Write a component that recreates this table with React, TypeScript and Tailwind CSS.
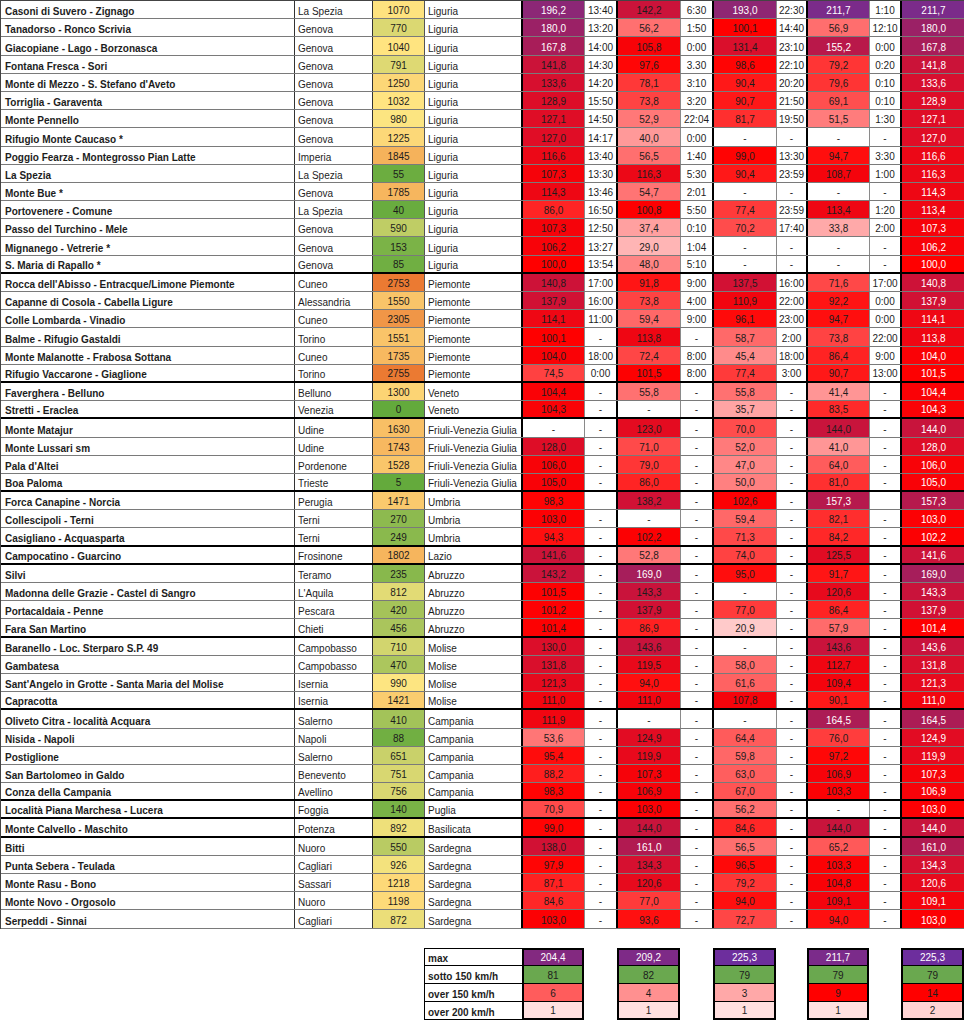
import { Fragment } from 'react'

type Stop = [number, number[]]

const valueStops: Stop[] = [
  [0, [255, 255, 255]],
  [100, [255, 0, 0]],
  [130, [220, 14, 42]],
  [150, [192, 22, 68]],
  [170, [165, 30, 92]],
  [200, [136, 40, 122]],
  [226, [108, 46, 158]],
]

const altStops: Stop[] = [
  [0, [99, 170, 60]],
  [1000, [255, 230, 130]],
  [2755, [235, 122, 50]],
]

function scale(stops: Stop[], v: number) {
  for (let i = 1; i < stops.length; i++) {
    const [a, ca] = stops[i - 1]
    const [b, cb] = stops[i]
    if (v <= b || i === stops.length - 1) {
      const t = Math.max(0, Math.min(1, (v - a) / (b - a)))
      return `rgb(${ca.map((x, j) => Math.round(x + (cb[j] - x) * t)).join(',')})`
    }
  }
  return '#fff'
}

const num = (s: string) => (s === '-' || s === '' ? null : parseFloat(s.replace(',', '.')))

const groups: string[][] = [
  [
    'Casoni di Suvero - Zignago|La Spezia|1070|Liguria|196,2|13:40|142,2|6:30|193,0|22:30|211,7|1:10|211,7',
    'Tanadorso - Ronco Scrivia|Genova|770|Liguria|180,0|13:20|56,2|1:50|100,1|14:40|56,9|12:10|180,0',
    'Giacopiane - Lago - Borzonasca|Genova|1040|Liguria|167,8|14:00|105,8|0:00|131,4|23:10|155,2|0:00|167,8',
    'Fontana Fresca - Sori|Genova|791|Liguria|141,8|14:30|97,6|3.30|98,6|22:10|79,2|0:20|141,8',
    "Monte di Mezzo - S. Stefano d'Aveto|Genova|1250|Liguria|133,6|14:20|78,1|3:10|90,4|20:20|79,6|0:10|133,6",
    'Torriglia - Garaventa|Genova|1032|Liguria|128,9|15:50|73,8|3:20|90,7|21:50|69,1|0:10|128,9',
    'Monte Pennello|Genova|980|Liguria|127,1|14:50|52,9|22:04|81,7|19:50|51,5|1:30|127,1',
    'Rifugio Monte Caucaso *|Genova|1225|Liguria|127,0|14:17|40,0|0:00|-|-|-|-|127,0',
    'Poggio Fearza - Montegrosso Pian Latte|Imperia|1845|Liguria|116,6|13:40|56,5|1:40|99,0|13:30|94,7|3:30|116,6',
    'La Spezia|La Spezia|55|Liguria|107,3|13:30|116,3|5:30|90,4|23:59|108,7|1:00|116,3',
    'Monte Bue *|Genova|1785|Liguria|114,3|13:46|54,7|2:01|-|-|-|-|114,3',
    'Portovenere - Comune|La Spezia|40|Liguria|86,0|16:50|100,8|5:50|77,4|23:59|113,4|1:20|113,4',
    'Passo del Turchino - Mele|Genova|590|Liguria|107,3|12:50|37,4|0:10|70,2|17:40|33,8|2:00|107,3',
    'Mignanego - Vetrerie *|Genova|153|Liguria|106,2|13:27|29,0|1:04|-|-|-|-|106,2',
    'S. Maria di Rapallo *|Genova|85|Liguria|100,0|13:54|48,0|5:10|-|-|-|-|100,0',
  ],
  [
    "Rocca dell'Abisso - Entracque/Limone Piemonte|Cuneo|2753|Piemonte|140,8|17:00|91,8|9:00|137,5|16:00|71,6|17:00|140,8",
    'Capanne di Cosola - Cabella Ligure|Alessandria|1550|Piemonte|137,9|16:00|73,8|4:00|110,9|22:00|92,2|0:00|137,9',
    'Colle Lombarda - Vinadio|Cuneo|2305|Piemonte|114,1|11:00|59,4|9:00|96,1|23:00|94,7|0:00|114,1',
    'Balme - Rifugio Gastaldi|Torino|1551|Piemonte|100,1|-|113,8|-|58,7|2:00|73,8|22:00|113,8',
    'Monte Malanotte - Frabosa Sottana|Cuneo|1735|Piemonte|104,0|18:00|72,4|8:00|45,4|18:00|86,4|9:00|104,0',
    'Rifugio Vaccarone - Giaglione|Torino|2755|Piemonte|74,5|0:00|101,5|8:00|77,4|3:00|90,7|13:00|101,5',
  ],
  [
    'Faverghera - Belluno|Belluno|1300|Veneto|104,4|-|55,8|-|55,8|-|41,4|-|104,4',
    'Stretti - Eraclea|Venezia|0|Veneto|104,3|-|-|-|35,7|-|83,5|-|104,3',
  ],
  [
    'Monte Matajur|Udine|1630|Friuli-Venezia Giulia|-|-|123,0|-|70,0|-|144,0|-|144,0',
    'Monte Lussari sm|Udine|1743|Friuli-Venezia Giulia|128,0|-|71,0|-|52,0|-|41,0|-|128,0',
    "Pala d'Altei|Pordenone|1528|Friuli-Venezia Giulia|106,0|-|79,0|-|47,0|-|64,0|-|106,0",
    'Boa Paloma|Trieste|5|Friuli-Venezia Giulia|105,0|-|86,0|-|50,0|-|81,0|-|105,0',
  ],
  [
    'Forca Canapine - Norcia|Perugia|1471|Umbria|98,3||138,2|-|102,6|-|157,3||157,3',
    'Collescipoli - Terni|Terni|270|Umbria|103,0|-|-|-|59,4|-|82,1|-|103,0',
    'Casigliano - Acquasparta|Terni|249|Umbria|94,3|-|102,2|-|71,3|-|84,2|-|102,2',
  ],
  ['Campocatino - Guarcino|Frosinone|1802|Lazio|141,6|-|52,8|-|74,0|-|125,5|-|141,6'],
  [
    'Silvi|Teramo|235|Abruzzo|143,2|-|169,0|-|95,0|-|91,7|-|169,0',
    "Madonna delle Grazie - Castel di Sangro|L'Aquila|812|Abruzzo|101,5|-|143,3|-|-|-|120,6|-|143,3",
    'Portacaldaia - Penne|Pescara|420|Abruzzo|101,2|-|137,9|-|77,0|-|86,4|-|137,9',
    'Fara San Martino|Chieti|456|Abruzzo|101,4|-|86,9|-|20,9|-|57,9|-|101,4',
  ],
  [
    'Baranello - Loc. Sterparo S.P. 49|Campobasso|710|Molise|130,0|-|143,6|-|-|-|143,6|-|143,6',
    'Gambatesa|Campobasso|470|Molise|131,8|-|119,5|-|58,0|-|112,7|-|131,8',
    "Sant'Angelo in Grotte - Santa Maria del Molise|Isernia|990|Molise|121,3|-|94,0|-|61,6|-|109,4|-|121,3",
    'Capracotta|Isernia|1421|Molise|111,0|-|111,0|-|107,8|-|90,1|-|111,0',
  ],
  [
    'Oliveto Citra - località Acquara|Salerno|410|Campania|111,9|-|-|-|-|-|164,5|-|164,5',
    'Nisida - Napoli|Napoli|88|Campania|53,6|-|124,9|-|64,4|-|76,0|-|124,9',
    'Postiglione|Salerno|651|Campania|95,4|-|119,9|-|59,8|-|97,2|-|119,9',
    'San Bartolomeo in Galdo|Benevento|751|Campania|88,2|-|107,3|-|63,0|-|106,9|-|107,3',
    'Conza della Campania|Avellino|756|Campania|98,3|-|106,9|-|67,0|-|103,3|-|106,9',
  ],
  ['Località Piana Marchesa - Lucera|Foggia|140|Puglia|70,9|-|103,0|-|56,2|-|-|-|103,0'],
  ['Monte Calvello - Maschito|Potenza|892|Basilicata|99,0|-|144,0|-|84,6|-|144,0|-|144,0'],
  [
    'Bitti|Nuoro|550|Sardegna|138,0|-|161,0|-|56,5|-|65,2|-|161,0',
    'Punta Sebera - Teulada|Cagliari|926|Sardegna|97,9|-|134,3|-|96,5|-|103,3|-|134,3',
    'Monte Rasu - Bono|Sassari|1218|Sardegna|87,1|-|120,6|-|79,2|-|104,8|-|120,6',
    'Monte Novo - Orgosolo|Nuoro|1198|Sardegna|84,6|-|77,0|-|94,0|-|109,1|-|109,1',
    'Serpeddi - Sinnai|Cagliari|872|Sardegna|103,0|-|93,6|-|72,7|-|94,0|-|103,0',
  ],
]

const COLS = 'grid-cols-[294px_78px_52px_98px_62px_33px_63px_33px_63px_31px_62px_32px_63px]'

function ValueCell({ text, always }: { text: string; always?: boolean }) {
  const v = num(text)
  const bg = v === null ? '#ffffff' : scale(valueStops, v)
  const light = v !== null && (always || v >= 150)
  return (
    <div
      className={`flex items-end justify-center pb-[2px] leading-[10px] ${always ? '' : 'border-r border-[#8a8a8a]'} ${light ? 'text-white' : 'text-[#1d1d1d]'}`}
      style={{ backgroundColor: bg }}
    >
      {text}
    </div>
  )
}

function TimeCell({ text }: { text: string }) {
  return (
    <div className="flex items-end justify-center pb-[2px] leading-[10px] border-r-2 border-black bg-white text-[#1d1d1d]">
      {text}
    </div>
  )
}

function Row({ line, last, end }: { line: string; last: boolean; end: boolean }) {
  const c = line.split('|')
  const alt = parseInt(c[2])
  return (
    <div
      className={`grid ${COLS} h-[18.2px] ${last && !end ? 'border-b-2 border-black' : 'border-b border-[#7a7a7a]'}`}
    >
      <div className="flex items-end pl-[4px] pb-[1px] leading-[10px] font-bold border-r border-[#333] truncate">{c[0]}</div>
      <div className="flex items-end pl-[3px] pb-[1px] leading-[10px] border-r border-[#333]">{c[1]}</div>
      <div
        className="flex items-end justify-center pb-[2px] leading-[10px] border-r border-[#555]"
        style={{ backgroundColor: scale(altStops, alt) }}
      >
        {c[2]}
      </div>
      <div className="flex items-end pl-[3px] pb-[1px] leading-[10px] border-r-2 border-black whitespace-nowrap">{c[3]}</div>
      <ValueCell text={c[4]} />
      <TimeCell text={c[5]} />
      <ValueCell text={c[6]} />
      <TimeCell text={c[7]} />
      <ValueCell text={c[8]} />
      <TimeCell text={c[9]} />
      <ValueCell text={c[10]} />
      <TimeCell text={c[11]} />
      <ValueCell text={c[12]} always />
    </div>
  )
}

const summary = [
  { label: 'max', vals: ['204,4', '209,2', '225,3', '211,7', '225,3'] },
  { label: 'sotto 150 km/h', vals: ['81', '82', '79', '79', '79'] },
  { label: 'over 150 km/h', vals: ['6', '4', '3', '9', '14'] },
  { label: 'over 200 km/h', vals: ['1', '1', '1', '1', '2'] },
]

const over150: Record<string, string> = { '6': '#ff5c5c', '4': '#ff9090', '3': '#ffa8a8', '9': '#ff0000', '14': '#ff0000' }
const over200: Record<string, string> = { '1': '#ffe0e0', '2': '#ffd3d3' }

function summaryBg(row: number, v: string) {
  if (row === 0) return scale(valueStops, num(v) ?? 0)
  if (row === 1) return '#6aa84f'
  if (row === 2) return over150[v]
  return over200[v]
}

export default function App() {
  return (
    <div className="w-[964px] h-[1020px] bg-white text-[10px] text-[#1d1d1d] font-['Liberation_Sans',Arial,sans-serif] overflow-hidden">
      <div className="border-t border-l border-[#444]">
        {groups.map((g, gi) =>
          g.map((line, i) => (
            <Row key={line} line={line} last={i === g.length - 1} end={gi === groups.length - 1} />
          )),
        )}
      </div>

      <div className="mt-[19px]">
        {summary.map((r, ri) => (
          <div key={r.label} className={`grid ${COLS} h-[18px]`}>
            <div className="col-span-3" />
            <div
              className={`flex items-end pl-[3px] pb-[1px] leading-[10px] font-bold border-l border-b border-black ${ri === 0 ? 'border-t' : ''}`}
            >
              {r.label}
            </div>
            {r.vals.map((v, vi) => (
              <Fragment key={vi}>
                <div
                  className={`flex items-end justify-center pb-[2px] leading-[10px] border-x-2 border-black ${ri === 0 ? 'border-t-2 text-white' : ''} ${ri === 3 ? 'border-b-2' : 'border-b'}`}
                  style={{ backgroundColor: summaryBg(ri, v) }}
                >
                  {v}
                </div>
                {vi < 4 && <div />}
              </Fragment>
            ))}
          </div>
        ))}
      </div>
    </div>
  )
}
